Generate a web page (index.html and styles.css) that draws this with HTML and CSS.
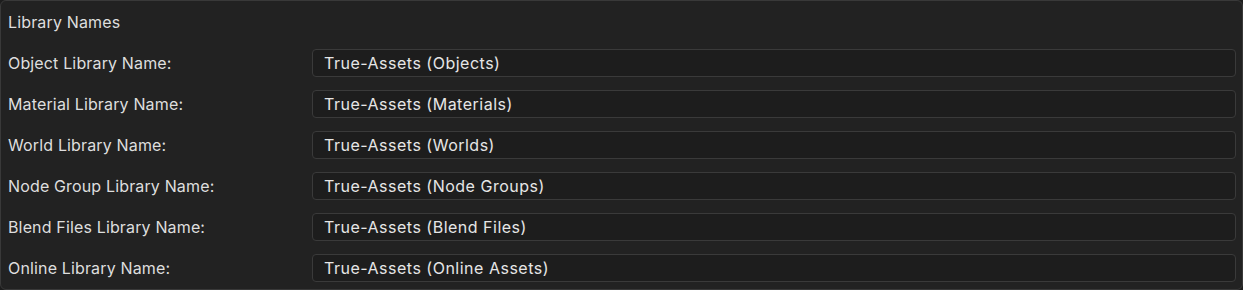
FILE: index.html
```html
<!DOCTYPE html>
<html lang="en">
<head>
    <meta charset="UTF-8">
    <title>Library Names</title>
    <link rel="stylesheet" href="styles.css">
</head>
<body>
    <div class="panel">
        <div class="panel-header">Library Names</div>

        <div class="prop-row">
            <label class="prop-label">Object Library Name:</label>
            <div class="text-field">True-Assets (Objects)</div>
        </div>
        <div class="prop-row">
            <label class="prop-label">Material Library Name:</label>
            <div class="text-field">True-Assets (Materials)</div>
        </div>
        <div class="prop-row">
            <label class="prop-label">World Library Name:</label>
            <div class="text-field">True-Assets (Worlds)</div>
        </div>
        <div class="prop-row">
            <label class="prop-label">Node Group Library Name:</label>
            <div class="text-field">True-Assets (Node Groups)</div>
        </div>
        <div class="prop-row">
            <label class="prop-label">Blend Files Library Name:</label>
            <div class="text-field">True-Assets (Blend Files)</div>
        </div>
        <div class="prop-row">
            <label class="prop-label">Online Library Name:</label>
            <div class="text-field">True-Assets (Online Assets)</div>
        </div>
    </div>
</body>
</html>
```

FILE: styles.css
```css
* {
    margin: 0;
    padding: 0;
    box-sizing: border-box;
}

body {
    background-color: #1d1d1d;
    font-family: Inter, "Noto Sans", sans-serif;
    font-size: 16px;
    letter-spacing: 0.15px;
    color: #dedede;
}

.panel {
    height: 290px;
    background-color: #222222;
    border: 1px solid #393939;
    border-radius: 6px;
    padding: 0 6px 0 7px;
}

.panel-header {
    height: 41px;
    display: flex;
    align-items: center;
}

.prop-row {
    display: grid;
    grid-template-columns: 304px 1fr;
    align-items: center;
    height: 41px;
}

.text-field {
    height: 28px;
    display: flex;
    align-items: center;
    padding-left: 11px;
    background-color: #1d1d1d;
    border: 1px solid #3a3a3a;
    border-radius: 4px;
    letter-spacing: 0.5px;
    color: #e6e6e6;
}
```
